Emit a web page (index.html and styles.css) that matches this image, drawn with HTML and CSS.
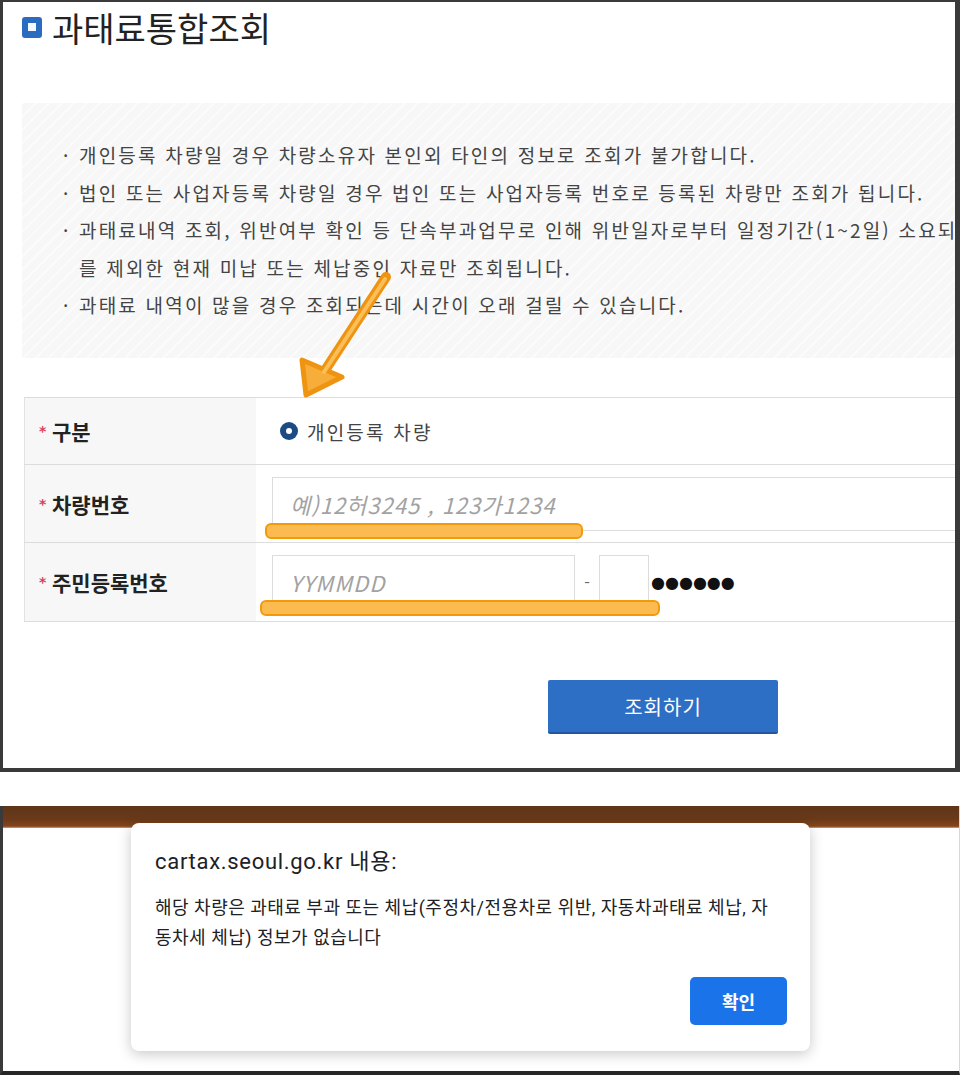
FILE: index.html
```html
<!DOCTYPE html>
<html lang="ko">
<head>
<meta charset="utf-8">
<title>과태료통합조회</title>
<link rel="stylesheet" href="styles.css">
</head>
<body>
<div class="shot shot-top">
  <h1 class="title"><span class="title-icon"></span>과태료통합조회</h1>

  <div class="notice">
    <p>개인등록 차량일 경우 차량소유자 본인외 타인의 정보로 조회가 불가합니다.</p>
    <p>법인 또는 사업자등록 차량일 경우 법인 또는 사업자등록 번호로 등록된 차량만 조회가 됩니다.</p>
    <p>과태료내역 조회, 위반여부 확인 등 단속부과업무로 인해 위반일자로부터 일정기간(1~2일) 소요되는 자료<br>를 제외한 현재 미납 또는 체납중인 자료만 조회됩니다.</p>
    <p>과태료 내역이 많을 경우 조회되는데 시간이 오래 걸릴 수 있습니다.</p>
  </div>

  <div class="form">
    <div class="row row-type">
      <div class="label"><span class="star">*</span>구분</div>
      <div class="cell cell-radio">
        <span class="radio"></span><span class="radio-text">개인등록 차량</span>
      </div>
    </div>
    <div class="row row-car">
      <div class="label"><span class="star">*</span>차량번호</div>
      <div class="cell">
        <div class="field field-wide"><span class="ph">예)12허3245 , 123가1234</span></div>
      </div>
    </div>
    <div class="row row-id">
      <div class="label"><span class="star">*</span>주민등록번호</div>
      <div class="cell">
        <div class="field field-birth"><span class="ph">YYMMDD</span></div>
        <span class="dash">-</span>
        <div class="field field-one"></div>
        <span class="dots">●●●●●●</span>
      </div>
    </div>
  </div>

  <div class="actions">
    <button class="btn-search" type="button">조회하기</button>
  </div>

  <span class="mark mark-car"></span>
  <span class="mark mark-id"></span>
  <svg class="arrow" width="120" height="150" viewBox="0 0 120 150">
    <g stroke="#ef9410" stroke-linecap="round" stroke-linejoin="round">
      <path d="M96 13 L30 114" stroke-width="10" fill="none"/>
      <path d="M12 96 L16 131 L52 113 Z" stroke-width="5" fill="#f7ad3a"/>
    </g>
    <g stroke="#fbbf5a" stroke-linecap="round">
      <path d="M95 15 L34 108" stroke-width="4" fill="none"/>
    </g>
  </svg>
</div>

<div class="gap"></div>

<div class="shot shot-bottom">
  <div class="brownbar"></div>
  <div class="dialog">
    <div class="dialog-title">cartax.seoul.go.kr 내용:</div>
    <div class="dialog-msg">해당 차량은 과태료 부과 또는 체납(주정차/전용차로 위반, 자동차과태료 체납, 자<br>동차세 체납) 정보가 없습니다</div>
    <div class="dialog-actions">
      <button class="btn-ok" type="button">확인</button>
    </div>
  </div>
</div>
</body>
</html>
```

FILE: styles.css
```css
* { box-sizing: border-box; }

body {
  margin: 0;
  width: 960px;
  background: #fff;
  font-family: "Noto Sans CJK KR", "Noto Sans", sans-serif;
  color: #222;
}

.shot { position: relative; overflow: hidden; }

.shot-top {
  height: 772px;
  border-style: solid;
  border-color: #3a3a3a;
  border-width: 2px 5px 4px 3px;
}

.title {
  margin: 0;
  height: 50px;
  display: flex;
  align-items: center;
  gap: 10px;
  padding-left: 19px;
  font-size: 34px;
  font-weight: 400;
  color: #222;
}

.title-icon {
  width: 20px;
  height: 21px;
  border-radius: 3px;
  background: #2b6cc0;
  display: flex;
  align-items: center;
  justify-content: center;
}
.title-icon::after {
  content: "";
  width: 8px;
  height: 8px;
  background: #f4f8ff;
}

.notice {
  margin: 51px 0 0 19px;
  width: 960px;
  height: 255px;
  padding: 33px 0 0 41px;
  background:
    repeating-linear-gradient(135deg, rgba(255,255,255,0.5) 0 2px, rgba(255,255,255,0) 2px 9px),
    #f7f7f7;
  font-size: 19px;
  letter-spacing: 2.2px;
  line-height: 37.5px;
  color: #444;
  white-space: nowrap;
}
.notice p {
  margin: 0;
  padding-left: 16px;
  text-indent: -16px;
}
.notice p::before {
  content: "·";
  display: inline-block;
  width: 16px;
  text-indent: 0;
  letter-spacing: 0;
}

.form {
  margin: 39px 0 0 21px;
  width: 960px;
  border-top: 1px solid #dcdcdc;
}
.row {
  display: grid;
  grid-template-columns: 232px 1fr;
  border-bottom: 1px solid #dcdcdc;
}
.row-type { height: 67px; }
.row-car { height: 78px; }
.row-id { height: 79px; }

.label {
  display: flex;
  align-items: center;
  padding-left: 14px;
  background: #f7f7f7;
  border-left: 1px solid #e2e2e2;
  font-size: 21px;
  font-weight: 700;
  color: #222;
}
.star {
  color: #d8415c;
  font-family: "DejaVu Sans", sans-serif;
  font-size: 14px;
  width: 13px;
  font-weight: 700;
}

.cell {
  display: flex;
  align-items: center;
  padding-left: 16px;
}
.cell-radio { padding-left: 24px; }

.radio {
  width: 18px;
  height: 18px;
  border-radius: 50%;
  background: #1c4a84;
  display: flex;
  align-items: center;
  justify-content: center;
  margin-right: 9px;
}
.radio::after {
  content: "";
  width: 6px;
  height: 6px;
  border-radius: 50%;
  background: #fff;
}
.radio-text { font-size: 19px; letter-spacing: 2.2px; color: #444; }

.field {
  height: 54px;
  border: 1px solid #dcdcdc;
  background: #fff;
  display: flex;
  align-items: center;
  padding-left: 17px;
}
.field-wide { flex: 1; }
.field-birth { width: 303px; }
.field-one { width: 50px; }
.ph {
  font-style: italic;
  color: #a2a2a2;
  font-size: 22px;
  letter-spacing: 1px;
}
.dash {
  width: 24px;
  text-align: center;
  color: #666;
  font-size: 16px;
}
.dots {
  margin-left: 2px;
  font-family: "DejaVu Sans", sans-serif;
  font-size: 16px;
  color: #111;
}

.actions { padding: 58px 0 0 545px; }
.btn-search {
  width: 230px;
  height: 54px;
  border: 0;
  border-bottom: 2px solid #2356a0;
  border-radius: 2px;
  background: #2d6fc5;
  color: #fff;
  font-family: inherit;
  font-size: 20px;
  letter-spacing: 1px;
}

.mark {
  position: absolute;
  height: 16px;
  border: 2px solid #f19a0c;
  border-radius: 6px;
  background: #fbbb50;
}
.mark-car { left: 262px; top: 521px; width: 318px; }
.mark-id { left: 257px; top: 598px; width: 400px; }

.arrow {
  position: absolute;
  left: 287px;
  top: 262px;
}

.gap { height: 34px; }

.shot-bottom {
  height: 269px;
  border-left: 3px solid #3a3a3a;
  border-right: 1px solid #d8d8d8;
  border-bottom: 4px solid #262626;
}
.brownbar {
  height: 22px;
  background: linear-gradient(#5e3519, #6a3a19 60%, #85461b 92%, #c9a58a);
}

.dialog {
  position: absolute;
  left: 128px;
  top: 17px;
  width: 679px;
  height: 228px;
  display: flex;
  flex-direction: column;
  padding: 27px 23px 26px 24px;
  background: #fff;
  border-radius: 8px;
  box-shadow: 0 3px 14px rgba(0,0,0,0.22);
  font-family: Roboto, "Noto Sans CJK KR", sans-serif;
  color: #202124;
}
.dialog-title {
  font-size: 22px;
  letter-spacing: 0.7px;
  line-height: 24px;
}
.dialog-msg {
  margin-top: 19px;
  font-size: 18px;
  letter-spacing: 0.5px;
  line-height: 30px;
  white-space: nowrap;
}
.dialog-actions {
  margin-top: auto;
  display: flex;
  justify-content: flex-end;
}
.btn-ok {
  width: 97px;
  height: 48px;
  border: 0;
  border-radius: 5px;
  background: #1a73e8;
  color: #fff;
  font-family: inherit;
  font-size: 18px;
  font-weight: 700;
}
```
